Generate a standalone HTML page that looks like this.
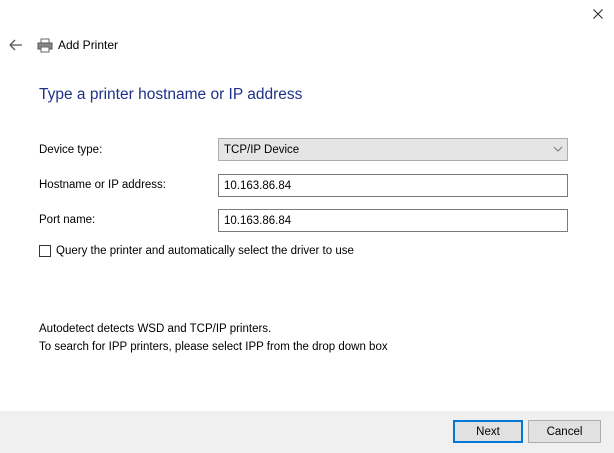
<!DOCTYPE html>
<html><head><style>
body{margin:0;width:614px;height:453px;background:#fff;position:relative;overflow:hidden;font-family:"Liberation Sans",sans-serif;font-size:11.5px;color:#000}
.a{position:absolute;white-space:nowrap}
.box{position:absolute;border:1px solid #7a7a7a;background:#fff;box-sizing:border-box;padding-left:5px;line-height:22px}
.btn{position:absolute;box-sizing:border-box;background:#e1e1e1;border:1px solid #adadad;text-align:center;line-height:23px}
</style></head><body>
<svg class="a" style="left:593px;top:9px" width="10" height="10"><path d="M0.5 0.5L9.5 9.5M9.5 0.5L0.5 9.5" stroke="#222" stroke-width="1"/></svg>
<svg class="a" style="left:9px;top:39px" width="14" height="12"><path d="M1 6H13M1 6L6 1M1 6L6 11" stroke="#555" stroke-width="1.3" fill="none"/></svg>
<svg class="a" style="left:37px;top:38px" width="16" height="15"><rect x="4" y="1" width="8" height="5" fill="#fff" stroke="#666"/><rect x="1" y="5" width="14" height="6" fill="#888" stroke="#555"/><rect x="4" y="9" width="8" height="5" fill="#fff" stroke="#666"/></svg>
<div class="a" style="left:58px;top:38px;font-size:12px">Add Printer</div>
<div class="a" style="left:39px;top:86px;font-size:15.5px;color:#1e3287">Type a printer hostname or IP address</div>
<div class="a" style="left:39px;top:144px">Device type:</div>
<div class="box" style="left:218px;top:138px;width:350px;height:23px;background:#e5e5e5;border-color:#adadad">TCP/IP Device</div>
<svg class="a" style="left:553px;top:146px" width="10" height="7"><path d="M1 1L5 5L9 1" stroke="#777" fill="none"/></svg>
<div class="a" style="left:39px;top:179px">Hostname or IP address:</div>
<div class="box" style="left:218px;top:174px;width:350px;height:23px">10.163.86.84</div>
<div class="a" style="left:39px;top:214px">Port name:</div>
<div class="box" style="left:218px;top:209px;width:350px;height:23px">10.163.86.84</div>
<div class="a" style="left:39px;top:245px;width:12px;height:12px;border:1px solid #333;box-sizing:border-box"></div>
<div class="a" style="left:56px;top:245px">Query the printer and automatically select the driver to use</div>
<div class="a" style="left:39px;top:323px">Autodetect detects WSD and TCP/IP printers.</div>
<div class="a" style="left:39px;top:341px">To search for IPP printers, please select IPP from the drop down box</div>
<div class="a" style="left:0;top:411px;width:614px;height:42px;background:#f0f0f0"></div>
<div class="btn" style="left:453px;top:420px;width:70px;height:23px;border:2px solid #0078d7;line-height:21px">Next</div>
<div class="btn" style="left:528px;top:420px;width:73px;height:23px">Cancel</div>
</body></html>
